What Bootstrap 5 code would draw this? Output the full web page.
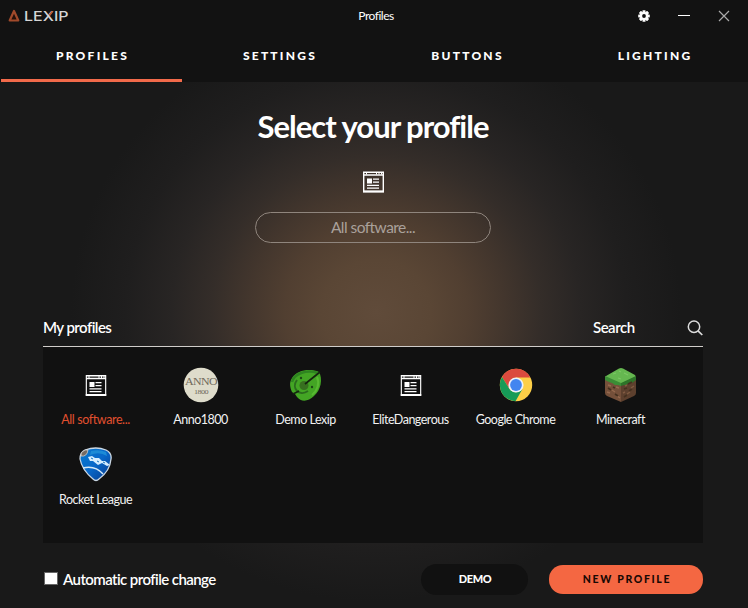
<!DOCTYPE html>
<html lang="en">
<head>
<meta charset="utf-8">
<meta name="viewport" content="width=device-width, initial-scale=1">
<title>Lexip – Profiles</title>
<link href="https://cdn.jsdelivr.net/npm/bootstrap@5.3.0/dist/css/bootstrap.min.css" rel="stylesheet">
<style>
body{height:608px;overflow:hidden;color:#fff;background:#191919;font-family:Lato,"Liberation Sans",sans-serif}
.app-window{width:748px;height:608px;background:radial-gradient(ellipse 305px 290px at 376px 312px,#604b3a 0,#5a4635 18%,#513f31 30%,#43362d 42%,#342d29 54%,#282524 67%,#1f1e1e 82%,#191919 100%)}
.app-head{height:82px;background:#121212}
.title-bar{display:grid;grid-template-columns:1fr auto 1fr;height:32px;padding:0 18px 0 7px}
.win-title{font-size:12px;letter-spacing:-.5px;padding-left:15px}
.tab-row{display:grid;grid-template-columns:repeat(4,181px);column-gap:6.5px;padding-left:1px;height:50px}
.tab-row .nav-link{height:50px;padding:0 0 3px;color:#fff;font-weight:900;font-size:12px;letter-spacing:2.25px;border-bottom:3px solid transparent;text-align:center;line-height:47px;padding-left:2px}
.tab-row .nav-link.active{border-color:#f26a4a}
.hero-part{height:227px;padding:24px 2px 0 0}
.hero-title{font-size:31px;line-height:40px;letter-spacing:-1px;font-weight:700;margin:0}
.hero-icon{margin-top:25px;height:22px}
.pick-box{width:236px;height:31px;margin-top:19px;background:transparent;border:1px solid #8f857d;border-radius:16px;color:#aaa19b;font-size:15.5px;letter-spacing:-.55px;line-height:28px;padding:0 0 2px;text-align:center}
.pick-box::placeholder{color:#aaa19b;opacity:1}
.main-part{padding:0 45px 0 43px}
.list-head{height:38px;border-bottom:1px solid #d0cdca;font-size:15px;font-weight:600;letter-spacing:-.55px}
.search-part{width:110px;letter-spacing:-.5px}
.profile-grid{display:grid;grid-template-columns:repeat(6,105px);grid-auto-rows:80px;height:196px;background:#111;align-content:start}
.profile-item{color:#f2f2f2;background:none;border:0;padding:0;font-size:12.5px;letter-spacing:-.5px;white-space:nowrap}
.profile-item svg{height:36px;width:36px;margin-top:20px}
.profile-item span{line-height:18px;margin-top:8px;flex-shrink:0}
.profile-item.chosen{color:#e2502f}
.profile-item.chosen span{letter-spacing:-.4px}
.foot-row{height:65px;padding-top:7px}
.auto-label{font-size:15px;font-weight:600;letter-spacing:-.57px}
.auto-check.form-check-input{width:14px;height:13px;border-radius:0;background:#fff;border:1px solid #666;margin:0 5px 2px 1px}
.pill{height:31px;border-radius:16px;border:0;font-weight:900;font-size:11px;padding:0}
.demo-pill{width:107px;background:#111!important;color:#fff!important;margin-right:21px;letter-spacing:-.4px;padding-left:1px}
.new-pill{width:154px;height:29px;background:#f46742!important;color:#190904!important;letter-spacing:1.65px;border-radius:14px;font-size:10.5px;padding:2px 0 0 2px}
</style>
<script src="https://cdn.jsdelivr.net/npm/bootstrap@5.3.0/dist/js/bootstrap.bundle.min.js"></script>
</head>
<body>
<svg width="0" height="0" class="position-absolute" aria-hidden="true">
<symbol id="page-icon" viewBox="0 0 21 21"><path fill="none" stroke="currentColor" stroke-width="1.400" d="M.7.7h19.600v19.300H.7zM1 3.500h19"/><path fill="currentColor" d="M0 19h21v2H0zM4 7h5v5H4zM10 7h6v1.200h-6zM10 10h6v1.200h-6zM4 13.200h12v1.200H4zM4 16h12v1.200H4zM3 1h1v2H3zM13 1h1v2h-1zM15.500 1h1v2h-1zM18 1h1v2h-1z"/></symbol>
</svg>
<div class="app-window d-flex flex-column">
<header class="app-head">
 <div class="title-bar align-items-center">
  <svg width="63" height="16" viewBox="0 0 63 16">
   <path d="M7 3 11.300 12.500H2.700Z" fill="#251009" stroke="#a14a2b" stroke-width="2.200" stroke-linejoin="round"/>
   <text x="17" y="12.800" textLength="44.500" lengthAdjust="spacingAndGlyphs" fill="#d6d6d6" font-family="Inter,Lato,sans-serif" font-size="13" font-weight="500">LEXIP</text>
   <path d="M42.300 7.400 45.500 3.300" stroke="#b95730" stroke-width="1.800"/>
  </svg>
  <div class="win-title">Profiles</div>
  <div class="d-flex justify-content-end align-items-center">
   <svg width="12" height="12" viewBox="-6 -6 12 12"><g fill="#fff"><rect x="-1.500" y="-5.800" width="3" height="11.600" rx=".4"/><rect x="-1.500" y="-5.800" width="3" height="11.600" rx=".4" transform="rotate(45)"/><rect x="-1.500" y="-5.800" width="3" height="11.600" rx=".4" transform="rotate(90)"/><rect x="-1.500" y="-5.800" width="3" height="11.600" rx=".4" transform="rotate(135)"/><circle r="4.100"/></g><circle r="1.900" fill="#121212"/></svg>
   <svg class="ms-4 me-4" width="20" height="12" viewBox="0 0 20 12"><path d="M4 5.500h12" stroke="#fff"/></svg>
   <svg width="12" height="12" viewBox="0 0 12 12"><path d="m1 1 10 10M11 1 1 11" stroke="#aaa" stroke-width="1.200"/></svg>
  </div>
 </div>
 <nav class="tab-row nav">
  <a class="nav-link active" href="#">PROFILES</a><a class="nav-link" href="#">SETTINGS</a><a class="nav-link" href="#">BUTTONS</a><a class="nav-link" href="#">LIGHTING</a>
 </nav>
</header>
<section class="hero-part d-flex flex-column align-items-center">
 <h1 class="hero-title">Select your profile</h1>
 <svg class="hero-icon" width="21" height="21"><use href="#page-icon"/></svg>
 <input class="pick-box" type="text" placeholder="All software..." aria-label="Software">
</section>
<main class="main-part">
 <div class="list-head d-flex justify-content-between align-items-center">
  <span>My profiles</span>
  <div class="search-part d-flex justify-content-between align-items-center"><span>Search</span>
   <svg width="16" height="16" viewBox="0 0 16 16"><circle cx="7" cy="6.700" r="5.700" fill="none" stroke="#ddd" stroke-width="1.500"/><path d="m11 10.800 4.300 4.200" stroke="#ddd" stroke-width="1.700"/></svg></div>
 </div>
 <div class="profile-grid">
  <button class="profile-item chosen d-flex flex-column align-items-center justify-content-start"><svg class="text-white flex-shrink-0" viewBox="-7.500 -8 36 36"><use href="#page-icon" width="21" height="21"/></svg><span>All software...</span></button>
  <button class="profile-item d-flex flex-column align-items-center justify-content-start"><svg class="flex-shrink-0" viewBox="0 0 36 36"><circle cx="18" cy="18" r="17.300" fill="#dedccb"/><g fill="#716b5c" font-family="Liberation Serif,serif"><text x="2" y="17.500" font-size="10" textLength="32" lengthAdjust="spacingAndGlyphs">ANNO</text><text x="11" y="27" font-size="7" textLength="14" lengthAdjust="spacingAndGlyphs">1800</text></g></svg><span>Anno1800</span></button>
  <button class="profile-item d-flex flex-column align-items-center justify-content-start"><svg class="flex-shrink-0" viewBox="0 0 36 36"><path d="M4 11C9 3 22 1 31 5c4 7 2 18-5 24-6 6-13 6-17 1L7 27 4 25C2 20 1 16 4 11Z" fill="#43a524"/><path d="M4 15C6 7 18 2 30 6" fill="none" stroke="#2e8420" stroke-width="2.500"/><path d="M29 10c3 7 0 14-5 18" fill="none" stroke="#58b932" stroke-width="2"/><path d="M9 13c-6 8 2 17 11 11" fill="none" stroke="#2b6c1e" stroke-width="2"/><circle cx="16" cy="18.500" r="4.500" fill="#37701f"/><path d="m17 17 15-12M5 27l6-3" stroke="#15250f" stroke-width="1.700"/><circle cx="24" cy="20" r="1.200" fill="#1c4a16"/><circle cx="13" cy="11" r="1.200" fill="#1c4a16"/></svg><span>Demo Lexip</span></button>
  <button class="profile-item d-flex flex-column align-items-center justify-content-start"><svg class="text-white flex-shrink-0" viewBox="-7.500 -8 36 36"><use href="#page-icon" width="21" height="21"/></svg><span>EliteDangerous</span></button>
  <button class="profile-item d-flex flex-column align-items-center justify-content-start"><svg class="flex-shrink-0" viewBox="0 0 36 36"><g transform="translate(18 18)"><circle r="16.200" fill="#fdcf47"/><path d="M0-7.600H14.300A16.200 16.200 0 0 0-14-8.100L-6.600 3.800Z" fill="#db4a3e"/><path d="M-14-8.100-6.600 3.800C-4 8 2 9 6.600 3.800L-.5 16.200A16.200 16.200 0 0 1-14-8.100Z" fill="#169b57"/><circle r="7.600" fill="#edf1f7"/><circle r="5.900" fill="#4285f0"/></g></svg><span>Google Chrome</span></button>
  <button class="profile-item d-flex flex-column align-items-center justify-content-start"><svg class="flex-shrink-0" viewBox="0 0 36 36"><path d="M2 9 18 15v20L4 29Q2 28 2 26Z" fill="#75503a"/><path d="M33 9 18 15v20l13-6q2-1 2-3Z" fill="#5d402e"/><path d="M3 9 16 1.500q2-1 4 0L32 8q1 1 0 2L18 17 3 10Q2 9 3 9Z" fill="#65b750"/><path d="m2 9 16 7v3l-3-1-3 0-3-2-3-1-4-2Z" fill="#3b8d35"/><path d="m33 9-15 7v3l3-1 2 0 3-2 3 0 4-3Z" fill="#2d7429"/><path d="m10 7 3-1m2 5 3 1m3-6 4 2m-9-4 2 1" stroke="#7bc764" stroke-width="1.200"/><path d="m5 18 3 1m1 4 3 2m-8 0 3 1m6-6 3 1m-2 8 3 2" stroke="#96694e" stroke-width="1.500"/><path d="m5 21 3 2m4 4 3 2m-5-9 2 1m9 1 3-1m2 3 3-2m-8 8 3-2m1-11 4-2" stroke="#45301f" stroke-width="1.600"/><path d="m22 19 2-1m4 3 3-2m-7 8 3-2m-7 1 2-1" stroke="#805a41" stroke-width="1.500"/></svg><span>Minecraft</span></button>
  <button class="profile-item d-flex flex-column align-items-center justify-content-start"><svg class="flex-shrink-0" viewBox="0 0 36 36"><defs><linearGradient id="shieldBlue" x1="0" y1="0" x2="1" y2="1"><stop stop-color="#087ace"/><stop offset=".5" stop-color="#0868c9"/><stop offset="1" stop-color="#07378a"/></linearGradient></defs><path d="M7 3Q18-1 28 3q6 3 5 9-1 12-12 20-3 3-6 0Q4 23 2 12 2 5 7 3Z" fill="url(#shieldBlue)" stroke="#cbd7e3" stroke-width="1.300"/><path d="M13 4q8-2 15 1l1 4Q21 4 12 8Z" fill="#1c8bd6"/><path d="M3 9Q9 10 10 3L7 3Q2 5 3 9Z" fill="#756b63" stroke="#ded9d3" stroke-width=".7"/><path d="m10 10 4-1 3 2 4 0 3 3 3 0 5 4-3 1-5-3-4 2-5-4-3 0Z" fill="#d5edff"/><path d="m13 11 2 1m4 2 2 1m4 0 2 1" stroke="#1474bd"/><path d="M5 21q12-3 20 6" fill="none" stroke="#d5e9f7" stroke-width="1.600"/></svg><span>Rocket League</span></button>
 </div>
 <footer class="foot-row d-flex align-items-center">
  <label class="auto-label d-flex align-items-center me-auto"><input type="checkbox" class="auto-check form-check-input">Automatic profile change</label>
  <button class="btn pill demo-pill">DEMO</button>
  <button class="btn pill new-pill">NEW PROFILE</button>
 </footer>
</main>
</div>
</body>
</html>
